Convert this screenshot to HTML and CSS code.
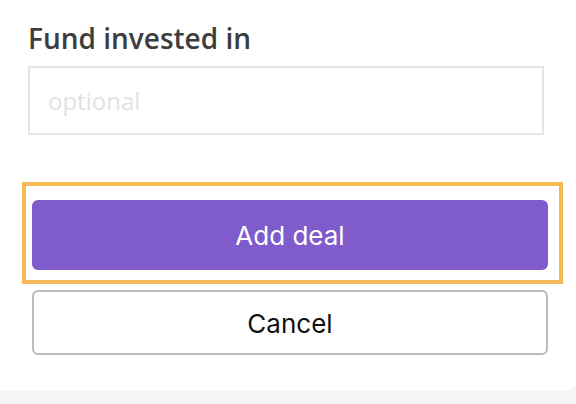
FILE: index.html
```html
<!DOCTYPE html>
<html lang="en">
<head>
  <meta charset="UTF-8" />
  <meta name="viewport" content="width=device-width, initial-scale=1" />
  <title>Add deal</title>
  <link rel="stylesheet" href="styles.css">
</head>
<body>

<div class="card">
  <form class="deal-form">
    <label class="field-label" for="fund">Fund invested in</label>
    <input class="field-input" type="text" id="fund" name="fund" placeholder="optional" />

    <div class="highlight">
      <button type="submit" class="btn btn-primary">Add deal</button>
    </div>
    <button type="button" class="btn btn-secondary">Cancel</button>
  </form>
</div>

</body>
</html>
```

FILE: styles.css
```css
/* Reset básico */
* {
  box-sizing: border-box;
}

body {
  margin: 0;
  background: #f5f5f5;
  font-family: 'Open Sans', sans-serif;
}

.card {
  background: white;
  padding: 19px 0 36px 28px;
  border-bottom-right-radius: 8px;
}

.deal-form {
  display: flex;
  flex-direction: column;
  align-items: flex-start;
}

.field-label {
  font-size: 28px;
  font-weight: 600;
  line-height: 38px;
  color: #3d3d3d;
  margin-bottom: 9px;
}

.field-input {
  width: 516px;
  height: 69px;
  border: 2px solid #e6e6e6;
  padding: 0 18px;
  font-family: 'Open Sans', sans-serif;
  font-size: 24px;
  color: #333;
  outline: none;
}

.field-input::placeholder {
  color: #e2e2e2;
}

/* Recuadro naranja alrededor del botón principal */
.highlight {
  margin: 47px 0 0 -6px;
  width: 541px;
  border: 4px solid #f6b957;
  padding: 14px 11px 10px 6px;
}

.btn {
  display: flex;
  align-items: center;
  justify-content: center;
  width: 516px;
  font-family: Inter, 'Liberation Sans', sans-serif;
  font-size: 26px;
  border-radius: 6px;
  cursor: pointer;
}

.btn-primary {
  height: 70px;
  padding-top: 2px;
  background: #7f5bcb;
  color: white;
  border: none;
}

.btn-secondary {
  margin: 6px 0 0 4px;
  height: 65px;
  padding-top: 2px;
  background: white;
  color: #111;
  border: 2px solid #bcbcbc;
}
```
